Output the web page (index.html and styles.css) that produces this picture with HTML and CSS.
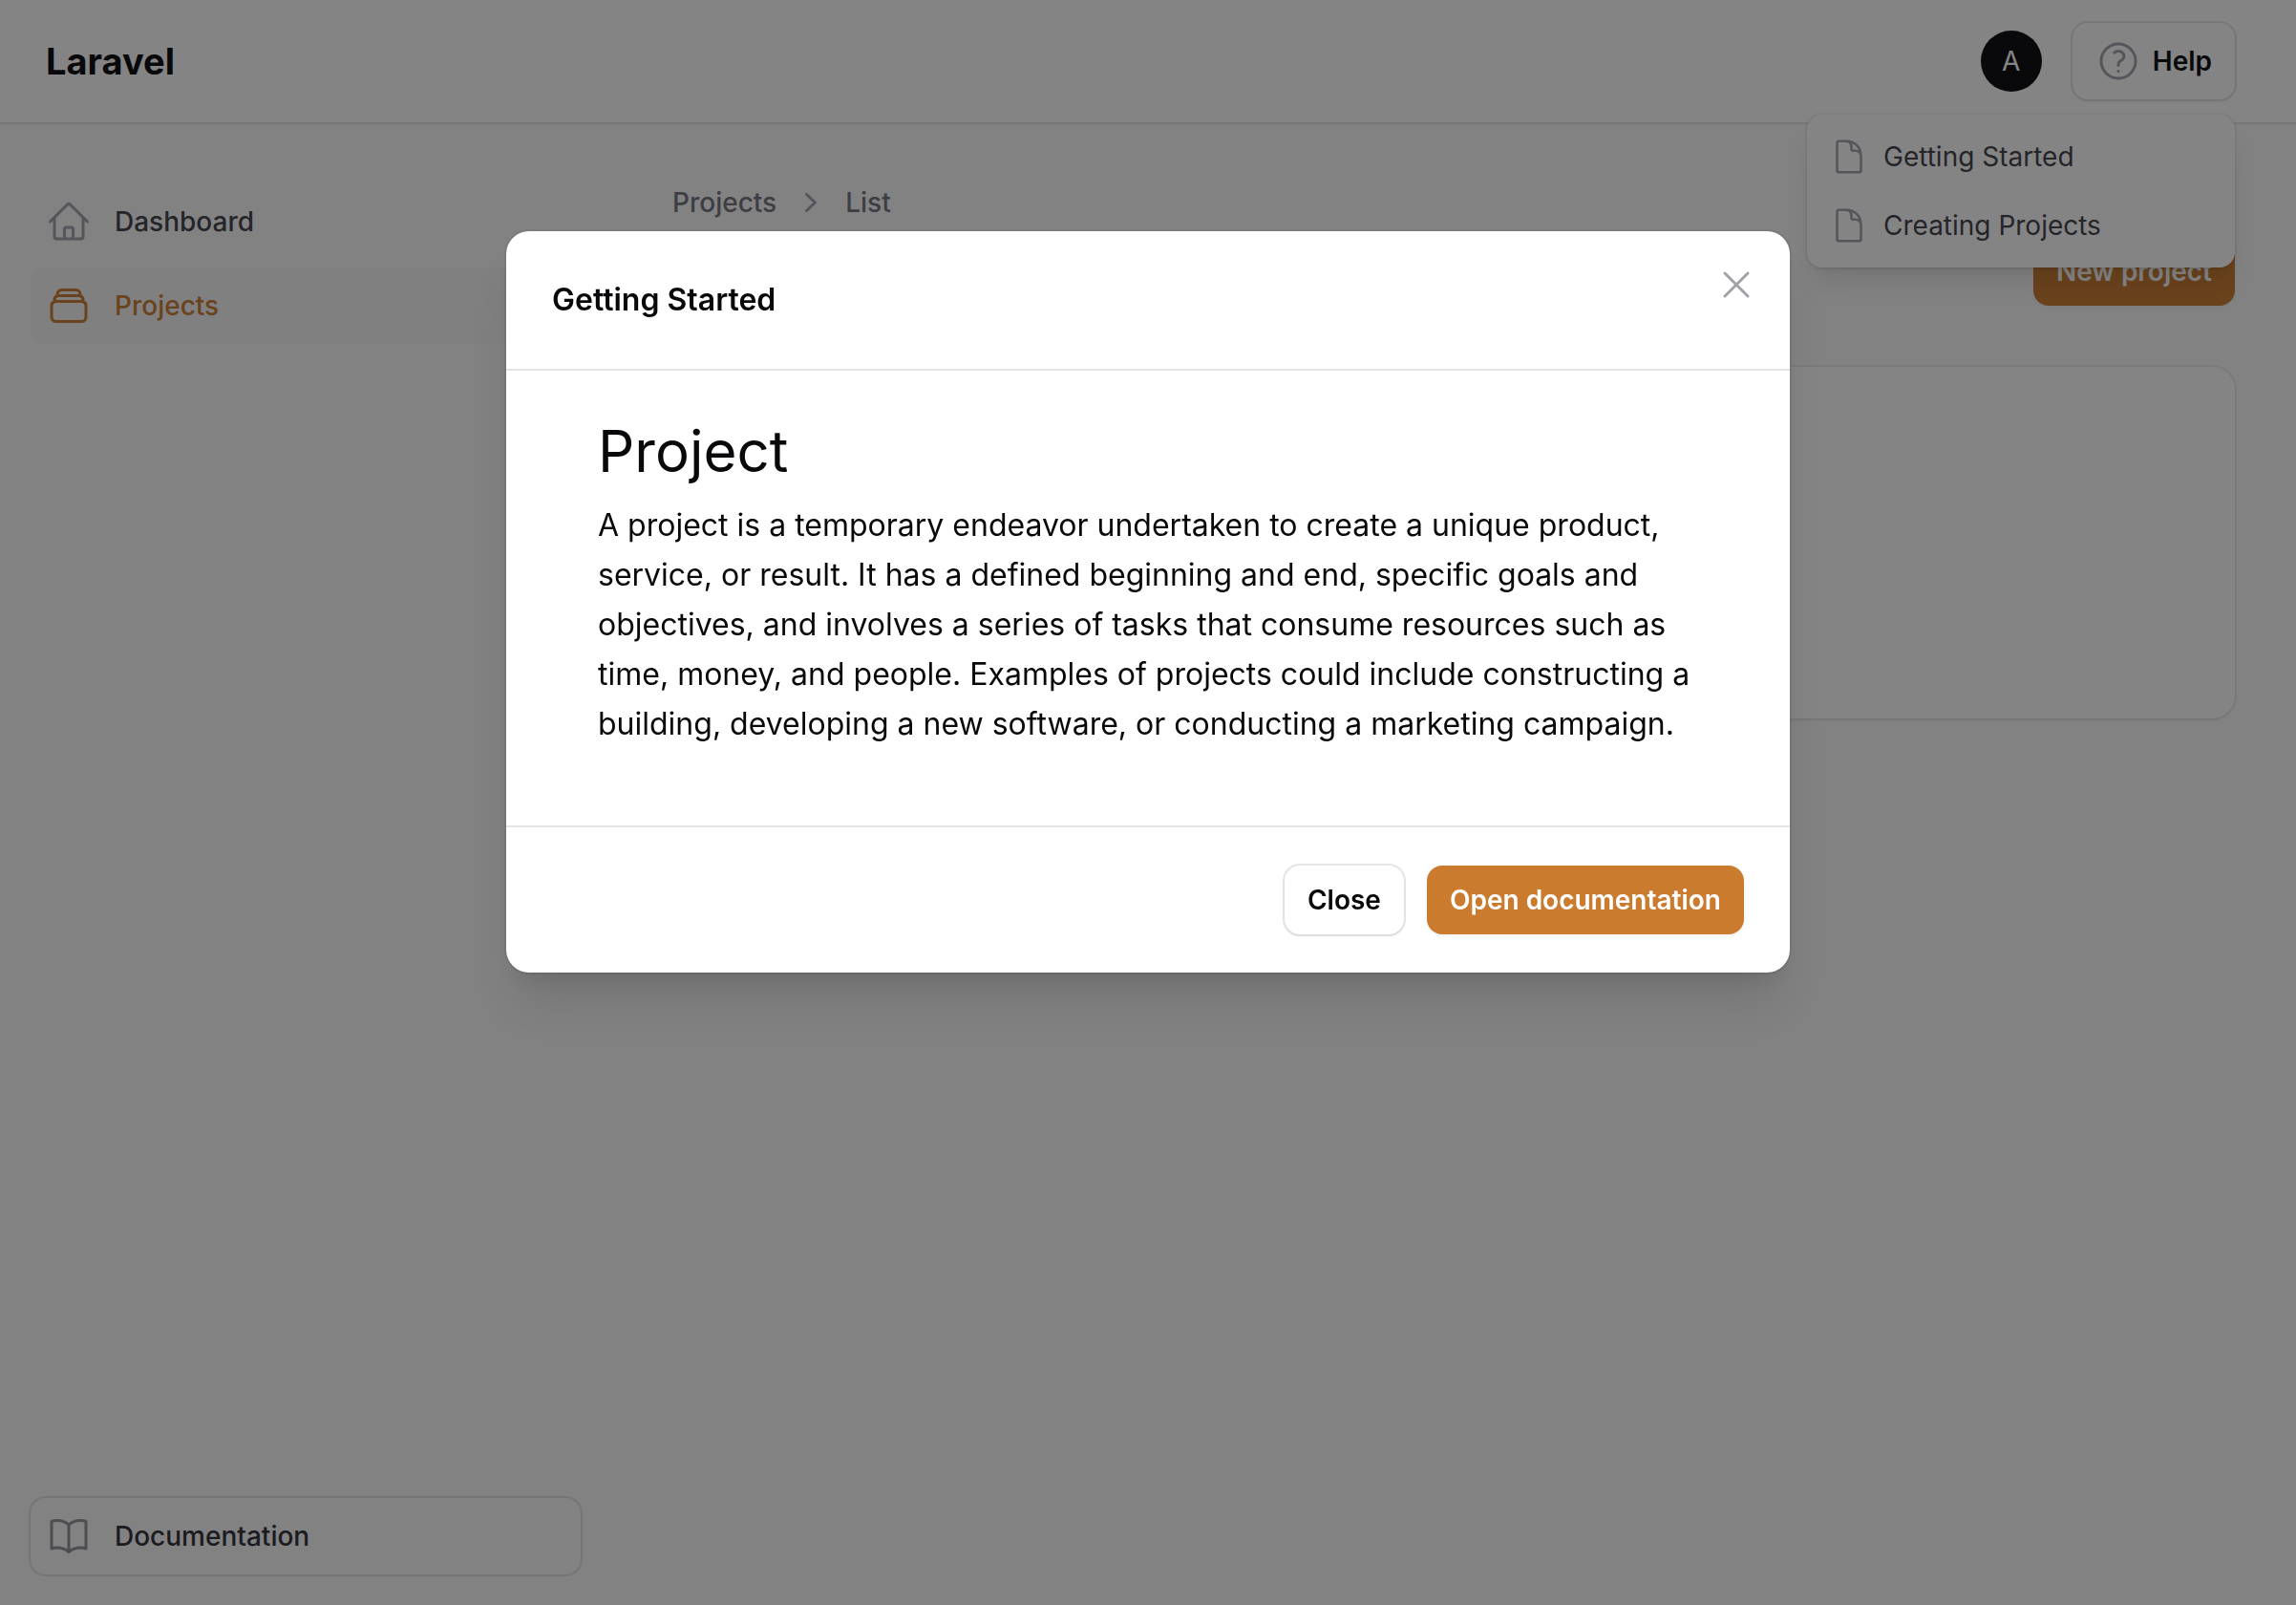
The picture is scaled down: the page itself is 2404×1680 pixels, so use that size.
FILE: index.html
```html
<!DOCTYPE html>
<html lang="en">
<head>
  <meta charset="utf-8">
  <meta name="viewport" content="width=device-width, initial-scale=1">
  <title>Projects - Laravel</title>
  <link rel="stylesheet" href="styles.css">
</head>
<body>
  <div class="app">
    <header class="topbar">
      <a class="brand" href="#">Laravel</a>
      <div class="topbar-actions">
        <button class="avatar" type="button" aria-label="User menu">A</button>
        <div class="dropdown">
          <button class="btn btn-gray btn-help" type="button" aria-haspopup="menu" aria-expanded="true">
            <svg class="icon" viewBox="0 0 24 24" aria-hidden="true"><path d="M9.879 7.519c1.171-1.025 3.071-1.025 4.242 0 1.172 1.025 1.172 2.687 0 3.712-.203.179-.43.326-.67.442-.745.361-1.45.999-1.45 1.827v.75M21 12a9 9 0 1 1-18 0 9 9 0 0 1 18 0Zm-9 5.25h.008v.008H12v-.008Z"/></svg>
            Help
          </button>
          <div class="dropdown-panel" role="menu">
            <button class="dropdown-item" type="button" role="menuitem">
              <svg class="icon icon-md" viewBox="0 0 24 24" aria-hidden="true"><path d="M19.5 14.25v-2.625a3.375 3.375 0 0 0-3.375-3.375h-1.5A1.125 1.125 0 0 1 13.5 7.125v-1.5a3.375 3.375 0 0 0-3.375-3.375H8.25m2.25 0H5.625c-.621 0-1.125.504-1.125 1.125v17.25c0 .621.504 1.125 1.125 1.125h12.75c.621 0 1.125-.504 1.125-1.125V11.25a9 9 0 0 0-9-9Z"/></svg>
              Getting Started
            </button>
            <button class="dropdown-item" type="button" role="menuitem">
              <svg class="icon icon-md" viewBox="0 0 24 24" aria-hidden="true"><path d="M19.5 14.25v-2.625a3.375 3.375 0 0 0-3.375-3.375h-1.5A1.125 1.125 0 0 1 13.5 7.125v-1.5a3.375 3.375 0 0 0-3.375-3.375H8.25m2.25 0H5.625c-.621 0-1.125.504-1.125 1.125v17.25c0 .621.504 1.125 1.125 1.125h12.75c.621 0 1.125-.504 1.125-1.125V11.25a9 9 0 0 0-9-9Z"/></svg>
              Creating Projects
            </button>
          </div>
        </div>
      </div>
    </header>

    <div class="layout">
      <aside class="sidebar">
        <nav class="nav">
          <a class="nav-item" href="#">
            <svg class="icon" viewBox="0 0 24 24" aria-hidden="true"><path d="m2.25 12 8.954-8.955c.44-.439 1.152-.439 1.591 0L21.75 12M4.5 9.75v10.125c0 .621.504 1.125 1.125 1.125H9.75v-4.875c0-.621.504-1.125 1.125-1.125h2.25c.621 0 1.125.504 1.125 1.125V21h4.125c.621 0 1.125-.504 1.125-1.125V9.75M8.25 21h8.25"/></svg>
            Dashboard
          </a>
          <a class="nav-item nav-item-active" href="#" aria-current="page">
            <svg class="icon" viewBox="0 0 24 24" aria-hidden="true"><path d="M6 6.878V6a2.25 2.25 0 0 1 2.25-2.25h7.5A2.25 2.25 0 0 1 18 6v.878m-12 0c.235-.083.487-.128.75-.128h10.5c.263 0 .515.045.75.128m-12 0A2.25 2.25 0 0 0 4.5 9v.878m13.5-3A2.25 2.25 0 0 1 19.5 9v.878m0 0a2.246 2.246 0 0 0-.75-.128H5.25c-.263 0-.515.045-.75.128m15 0A2.25 2.25 0 0 1 21 12v6a2.25 2.25 0 0 1-2.25 2.25H5.25A2.25 2.25 0 0 1 3 18v-6c0-.98.626-1.813 1.5-2.122"/></svg>
            Projects
          </a>
        </nav>
        <a class="nav-item nav-item-outlined" href="#">
          <svg class="icon" viewBox="0 0 24 24" aria-hidden="true"><path d="M12 6.042A8.967 8.967 0 0 0 6 3.75c-1.052 0-2.062.18-3 .512v14.25A8.987 8.987 0 0 1 6 18c2.305 0 4.408.867 6 2.292m0-14.25a8.966 8.966 0 0 1 6-2.292c1.052 0 2.062.18 3 .512v14.25A8.987 8.987 0 0 0 18 18a8.967 8.967 0 0 0-6 2.292m0-14.25v14.25"/></svg>
          Documentation
        </a>
      </aside>

      <main class="main">
        <nav class="breadcrumbs" aria-label="Breadcrumb">
          <a href="#">Projects</a>
          <svg class="chevron" viewBox="0 0 20 20" aria-hidden="true"><path fill-rule="evenodd" d="M7.21 14.77a.75.75 0 0 1 .02-1.06L11.168 10 7.23 6.29a.75.75 0 1 1 1.04-1.08l4.5 4.25a.75.75 0 0 1 0 1.08l-4.5 4.25a.75.75 0 0 1-1.06-.02Z" clip-rule="evenodd"/></svg>
          <a href="#">List</a>
        </nav>
        <div class="page-actions">
          <button class="btn btn-primary" type="button">New project</button>
        </div>
        <section class="card"></section>
      </main>
    </div>
  </div>

  <div class="overlay">
    <div class="modal" role="dialog" aria-modal="true" aria-labelledby="modal-title">
      <div class="modal-header">
        <h2 class="modal-title" id="modal-title">Getting Started</h2>
        <button class="modal-close" type="button" aria-label="Close">
          <svg class="icon" viewBox="0 0 24 24" aria-hidden="true"><path d="M6 18 18 6M6 6l12 12"/></svg>
        </button>
      </div>
      <div class="modal-body">
        <h1>Project</h1>
        <p>A project is a temporary endeavor undertaken to create a unique product, service, or result. It has a defined beginning and end, specific goals and objectives, and involves a series of tasks that consume resources such as time, money, and people. Examples of projects could include constructing a building, developing a new software, or conducting a marketing campaign.</p>
      </div>
      <div class="modal-footer">
        <button class="btn btn-gray" type="button">Close</button>
        <button class="btn btn-primary" type="button">Open documentation</button>
      </div>
    </div>
  </div>
</body>
</html>
```
FILE: styles.css
```css
:root {
  --gray-50: #fafafa;
  --gray-100: #f7f7f7;
  --gray-400: #a1a1aa;
  --gray-450: #8e8e96;
  --gray-500: #71717a;
  --gray-700: #3f3f46;
  --gray-800: #2f2f34;
  --gray-950: #09090b;
  --primary: #ca7b2e;
  --ring: rgb(9 9 11 / 5%);
  --ring-strong: rgb(9 9 11 / 10%);
  --shadow-sm: 0 2px 4px rgb(0 0 0 / 5%);
}

*,
*::before,
*::after {
  box-sizing: border-box;
}

body {
  margin: 0;
  background: var(--gray-50);
  color: var(--gray-950);
  font-family: Inter, "Liberation Sans", sans-serif;
  font-size: 28px;
  line-height: 40px;
}

a {
  color: inherit;
  text-decoration: none;
}

button {
  border: 0;
  background: none;
  color: inherit;
  font: inherit;
  cursor: pointer;
}

h1,
h2,
p {
  margin: 0;
}

.icon {
  flex: none;
  width: 48px;
  height: 48px;
  fill: none;
  stroke: var(--gray-400);
  stroke-width: 1.5;
  stroke-linecap: round;
  stroke-linejoin: round;
}

.icon-md {
  width: 40px;
  height: 40px;
}

.app {
  display: flex;
  flex-direction: column;
  min-height: 100vh;
}

/* Top bar */

.topbar {
  position: relative;
  z-index: 1;
  display: flex;
  align-items: center;
  justify-content: space-between;
  min-height: 128px;
  padding: 0 64px 0 48px;
  background: #fff;
  box-shadow: 0 0 0 2px var(--ring), var(--shadow-sm);
}

.brand {
  font-size: 38px;
  font-weight: 700;
}

.topbar-actions {
  display: flex;
  align-items: center;
  gap: 32px;
}

.avatar {
  width: 64px;
  height: 64px;
  padding: 0;
  border-radius: 50%;
  background: var(--gray-950);
  color: #fff;
}

.dropdown {
  position: relative;
}

.dropdown-panel {
  position: absolute;
  top: calc(100% + 16px);
  right: 0;
  width: 448px;
  padding: 8px;
  border-radius: 16px;
  background: #fff;
  box-shadow: 0 0 0 2px var(--ring), 0 20px 30px -6px rgb(0 0 0 / 10%), 0 8px 12px -8px rgb(0 0 0 / 10%);
}

.dropdown-item {
  display: flex;
  align-items: center;
  gap: 16px;
  width: 100%;
  padding: 16px;
  color: var(--gray-700);
  text-align: left;
}

/* Buttons */

.btn {
  display: flex;
  align-items: center;
  gap: 12px;
  padding: 16px 24px;
  border-radius: 16px;
  font-weight: 600;
}

.btn-gray {
  background: #fff;
  box-shadow: 0 0 0 2px var(--ring-strong), var(--shadow-sm);
}

.btn-primary {
  background: var(--primary);
  color: #fff;
  box-shadow: var(--shadow-sm);
}

/* Page layout */

.layout {
  display: grid;
  flex: 1;
  grid-template-columns: 640px 1fr;
}

.sidebar {
  display: flex;
  flex-direction: column;
  justify-content: space-between;
  padding: 64px 32px 32px;
}

.nav {
  display: flex;
  flex-direction: column;
  gap: 8px;
}

.nav-item {
  display: flex;
  align-items: center;
  gap: 24px;
  padding: 16px;
  border-radius: 16px;
  color: var(--gray-700);
  font-weight: 500;
}

.nav-item-active {
  background: var(--gray-100);
  color: var(--primary);
}

.nav-item-active .icon {
  stroke: currentColor;
}

.nav-item-outlined {
  color: var(--gray-800);
  box-shadow: 0 0 0 2px var(--ring-strong);
}

.nav-item-outlined .icon {
  stroke: var(--gray-450);
}

.main {
  padding: 64px;
}

.breadcrumbs {
  display: flex;
  align-items: center;
  gap: 16px;
  color: var(--gray-500);
  font-weight: 500;
}

.chevron {
  width: 40px;
  height: 40px;
  fill: var(--gray-400);
}

.page-actions {
  display: flex;
  justify-content: flex-end;
  margin-top: 16px;
}

.card {
  min-height: 368px;
  margin-top: 64px;
  border-radius: 24px;
  background: #fff;
  box-shadow: 0 0 0 2px var(--ring), var(--shadow-sm);
}

/* Modal */

.overlay {
  position: fixed;
  inset: 0;
  z-index: 10;
  display: grid;
  grid-template-rows: 1fr auto 3fr;
  justify-items: center;
  padding: 32px;
  overflow: auto;
  background: rgb(9 9 11 / 50%);
}

.modal {
  grid-row: 2;
  width: 100%;
  max-width: 1344px;
  border-radius: 24px;
  background: #fff;
  box-shadow: 0 0 0 2px var(--ring), 0 40px 50px -10px rgb(0 0 0 / 10%), 0 16px 20px -12px rgb(0 0 0 / 10%);
}

.modal-header {
  display: flex;
  align-items: flex-start;
  justify-content: space-between;
  padding: 32px 32px 48px 48px;
}

.modal-title {
  padding-top: 16px;
  font-size: 32px;
  font-weight: 600;
  line-height: 48px;
}

.modal-close {
  display: flex;
  padding: 0;
}

.modal-body {
  display: flex;
  flex-direction: column;
  gap: 16px;
  padding: 48px 96px 80px;
  border-top: 2px solid #e4e4e7;
}

.modal-body h1 {
  font-size: 60px;
  font-weight: 400;
  line-height: 72px;
}

.modal-body p {
  font-size: 32px;
  line-height: 52px;
}

.modal-footer {
  display: flex;
  justify-content: flex-end;
  gap: 24px;
  padding: 40px 48px;
  border-top: 2px solid #e4e4e7;
}
```
